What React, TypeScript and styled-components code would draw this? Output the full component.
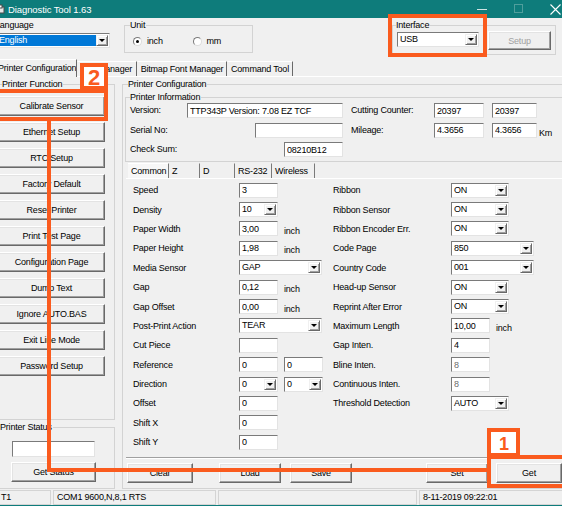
import React from "react";
import styled, { createGlobalStyle } from "styled-components";

const TEAL = "#0e7c7b";
const ORANGE = "#fa5b1e";

const GlobalStyle = createGlobalStyle`
  html, body {
    margin: 0;
    padding: 0;
    background: #f0f0f0;
  }
  body {
    font-family: "Liberation Sans", Arial, sans-serif;
    font-size: 9px;
    letter-spacing: -0.2px;
    color: #000;
  }
  * {
    box-sizing: border-box;
  }
`;

const Page = styled.div`
  position: relative;
  width: 562px;
  height: 506px;
  overflow: hidden;
  background: #f0f0f0;
`;

// the screenshot is cropped: the window starts 8px left of the picture
const Window = styled.div`
  width: 582px;
  height: 506px;
  margin-left: -8px;
  display: flex;
  flex-direction: column;
  border-bottom: 1px solid ${TEAL};
`;

/* ---------- title bar ---------- */

const TitleBar = styled.div`
  flex: none;
  height: 18px;
  display: flex;
  align-items: center;
  background: ${TEAL};
  color: #fff;
`;

const AppIcon = styled.svg`
  flex: none;
  width: 11px;
  height: 11px;
  margin-left: 2px;
`;

const Title = styled.span`
  margin-left: 3px;
  font-size: 9.5px;
  letter-spacing: -0.1px;
`;

const WinControls = styled.div`
  margin-left: auto;
  display: flex;
`;

const WinButton = styled.div`
  width: 37px;
  height: 18px;
  display: flex;
  align-items: center;
  justify-content: center;
`;

/* ---------- shared controls ---------- */

const Group = styled.fieldset<{ $w: number; $h: number }>`
  flex: none;
  margin: 0;
  padding: 0;
  min-width: 0;
  width: ${(p) => p.$w}px;
  height: ${(p) => p.$h}px;
  border: 1px solid #d3d3d3;
`;

const GroupTitle = styled.legend<{ $x: number }>`
  margin-left: ${(p) => p.$x}px;
  padding: 0 1px 0 0;
  line-height: 10px;
  font-size: 9px;
`;

const Button = styled.button<{ $w: number; $h?: number; $disabled?: boolean }>`
  flex: none;
  width: ${(p) => p.$w}px;
  height: ${(p) => p.$h ?? 20}px;
  padding: 0;
  margin: 0;
  font: inherit;
  letter-spacing: inherit;
  color: ${(p) => (p.$disabled ? "#a0a0a0" : "#000")};
  background: #f0f0f0;
  border: 1px solid;
  border-color: #fff #696969 #696969 #fff;
  box-shadow: inset -1px -1px 0 #a0a0a0, inset 1px 1px 0 #e3e3e3;
  text-align: center;
`;

const TextBox = styled.input<{ $w: number; $dim?: boolean }>`
  flex: none;
  width: ${(p) => p.$w}px;
  height: 15px;
  margin: 0;
  padding: 0 2px;
  font: inherit;
  letter-spacing: inherit;
  color: ${(p) => (p.$dim ? "#6d6d6d" : "#000")};
  background: #fff;
  border: 1px solid;
  border-color: #7a7a7a #e3e3e3 #e3e3e3 #7a7a7a;
  outline: none;
`;

const ComboBox = styled.div<{ $w: number }>`
  flex: none;
  width: ${(p) => p.$w}px;
  height: 15px;
  display: flex;
  padding: 1px;
  background: #fff;
  border: 1px solid;
  border-color: #7a7a7a #e3e3e3 #e3e3e3 #7a7a7a;
`;

const ComboText = styled.span<{ $selected?: boolean }>`
  flex: 1;
  padding-left: 1px;
  line-height: 11px;
  white-space: nowrap;
  overflow: hidden;
  background: ${(p) => (p.$selected ? "#0078d7" : "transparent")};
  color: ${(p) => (p.$selected ? "#fff" : "#000")};
`;

const ComboArrow = styled.span`
  flex: none;
  width: 12px;
  display: flex;
  align-items: center;
  justify-content: center;
  background: #f0f0f0;
  border: 1px solid;
  border-color: #f0f0f0 #696969 #696969 #f0f0f0;
  box-shadow: inset 1px 1px 0 #fff, inset -1px -1px 0 #a0a0a0;

  &::after {
    content: "";
    border-left: 3px solid transparent;
    border-right: 3px solid transparent;
    border-top: 3px solid #000;
  }
`;

function Combo({ w, value, selected }: { w: number; value: string; selected?: boolean }) {
  return (
    <ComboBox $w={w}>
      <ComboText $selected={selected}>{value}</ComboText>
      <ComboArrow />
    </ComboBox>
  );
}

/* ---------- top area ---------- */

const TopArea = styled.div`
  flex: none;
  height: 40px;
  display: flex;
  align-items: flex-start;
`;

const LangBlock = styled.div`
  flex: none;
  width: 115px;
  margin-left: 3px;
  padding-top: 2px;
`;

const Caption = styled.div`
  line-height: 11px;
  margin-bottom: 2px;
`;

const LangCombo = styled.div`
  margin-left: 1px;
`;

const UnitGroup = styled(Group)`
  margin: 2px 0 0 14px;
`;

const RadioRow = styled.div`
  display: flex;
  align-items: center;
  height: 14px;
  margin-top: 4px;
  padding-left: 8px;
`;

const RadioItem = styled.label`
  width: 60px;
  display: flex;
  align-items: center;
`;

const RadioDot = styled.span<{ $on?: boolean }>`
  flex: none;
  width: 9px;
  height: 9px;
  border-radius: 50%;
  background: #fff;
  border: 1px solid;
  border-color: #7a7a7a #dcdcdc #dcdcdc #7a7a7a;
  display: flex;
  align-items: center;
  justify-content: center;
  margin-right: 5px;

  &::after {
    content: "";
    width: 3px;
    height: 3px;
    border-radius: 50%;
    background: ${(p) => (p.$on ? "#000" : "transparent")};
  }
`;

const InterfaceGroup = styled(Group)`
  margin: 2px 0 0 139px;
`;

const InterfaceRow = styled.div`
  display: flex;
  align-items: flex-start;
  padding-left: 4px;
  padding-top: 2px;
`;

const SetupButton = styled(Button)`
  margin: -1px 0 0 9px;
`;

/* ---------- main tabs ---------- */

const TabStrip = styled.div`
  flex: none;
  height: 18px;
  display: flex;
  align-items: flex-end;
`;

const Tab = styled.div<{ $w: number; $active?: boolean }>`
  position: relative;
  z-index: ${(p) => (p.$active ? 1 : 0)};
  flex: none;
  width: ${(p) => p.$w}px;
  height: ${(p) => (p.$active ? 18 : 15)}px;
  margin-bottom: ${(p) => (p.$active ? -1 : 0)}px;
  padding-left: ${(p) => (p.$active ? 5 : 0)}px;
  display: flex;
  align-items: center;
  justify-content: ${(p) => (p.$active ? "flex-start" : "center")};
  padding-bottom: ${(p) => (p.$active ? 2 : 0)}px;
  background: #f0f0f0;
  border-top: 1px solid #fff;
  border-left: 1px solid ${(p) => (p.$active ? "#fff" : "transparent")};
  border-right: 1px solid #696969;
  white-space: nowrap;
  overflow: hidden;
`;

const TabPanel = styled.div`
  flex: none;
  height: 414px;
  display: flex;
  align-items: flex-start;
  border-top: 1px solid #fff;
`;

const LeftCol = styled.div`
  flex: none;
  width: 123px;
  display: flex;
  flex-direction: column;
`;

const FunctionGroup = styled(Group)`
  margin: 2px 0 0 2px;
`;

const ButtonStack = styled.div`
  display: flex;
  flex-direction: column;
  gap: 6px;
  padding: 7px 0 0 3px;
`;

const StatusGroup = styled(Group)`
  margin: 2px 0 0 2px;
`;

const StatusField = styled(TextBox)`
  display: block;
  height: 16px;
  margin: 9px 0 0 17px;
`;

const GetStatusButton = styled(Button)`
  display: block;
  margin: 5px 0 0 16px;
`;

const ConfigGroup = styled(Group)`
  margin: 2px 0 0 7px;
`;

const InfoGroup = styled(Group)`
  margin: 3px 0 0 2px;
`;

const InfoGrid = styled.div`
  display: grid;
  grid-template-columns: 57px 156px 8px 83px 50px 8px 45px auto;
  grid-auto-rows: 19.5px;
  align-items: start;
  padding: 1px 0 0 4px;
`;

const FieldLabel = styled.span`
  line-height: 15px;
  white-space: nowrap;
`;

const RightBox = styled(TextBox)`
  justify-self: end;
`;

const Unit = styled.span<{ $gap?: number }>`
  margin-left: ${(p) => p.$gap ?? 6}px;
  padding-top: 5px;
  line-height: 11px;
  white-space: nowrap;
`;

const InnerTabs = styled.div`
  display: flex;
  height: 15px;
  margin: 1px 0 0 5px;
`;

const InnerTab = styled.div<{ $w: number; $active?: boolean }>`
  flex: none;
  width: ${(p) => p.$w}px;
  padding-left: 3px;
  display: flex;
  align-items: center;
  background: ${(p) => (p.$active ? "#f7f7f7" : "#f0f0f0")};
  border-top: 1px solid ${(p) => (p.$active ? "#fff" : "transparent")};
  border-right: 1px solid #7a7a7a;
  white-space: nowrap;
`;

const InnerPanel = styled.div`
  margin-left: 3px;
  width: 450px;
  height: 280px;
  padding: 1.5px 0 0 7px;
  border-top: 1px solid #fff;
  border-bottom: 1px solid #a0a0a0;
  box-shadow: 0 1px 0 #fff;
`;

const ParamGrid = styled.div`
  display: grid;
  grid-template-columns: 106px 94px 118px 1fr;
  grid-auto-rows: 19.4px;
  align-items: center;
`;

const ParamLabel = styled.span`
  white-space: nowrap;
`;

const ControlCell = styled.div`
  display: flex;
  align-items: center;
  gap: 6px;
`;

const ActionRow = styled.div`
  display: flex;
  margin-top: 5px;
  padding-left: 4px;
`;

const ActionButton = styled(Button)<{ $gap: number }>`
  margin-left: ${(p) => p.$gap}px;
`;

/* ---------- status bar ---------- */

const StatusBar = styled.div`
  flex: none;
  height: 15px;
  display: flex;
  gap: 2px;
`;

const StatusPanel = styled.div<{ $w?: number; $pad?: number }>`
  flex: ${(p) => (p.$w ? "none" : "1")};
  width: ${(p) => (p.$w ? `${p.$w}px` : "auto")};
  padding-left: ${(p) => p.$pad ?? 3}px;
  line-height: 13px;
  border: 1px solid #d4d4d4;
  white-space: nowrap;
  overflow: hidden;
`;

/* ---------- annotation overlay ---------- */

const Overlay = styled.svg`
  position: absolute;
  left: 0;
  top: 0;
  width: 562px;
  height: 506px;
  pointer-events: none;
`;

const Marker = styled.text`
  font-family: "Liberation Sans", Arial, sans-serif;
  font-weight: bold;
  fill: ${ORANGE};
`;

/* ---------- data ---------- */

type Ctl =
  | { kind: "input"; value: string; w?: number; dim?: boolean }
  | { kind: "combo"; value: string; w: number }
  | { kind: "unit"; text: string };

const inp = (value: string, dim?: boolean): Ctl => ({ kind: "input", value, dim });
const cmb = (value: string, w: number): Ctl => ({ kind: "combo", value, w });
const inch: Ctl = { kind: "unit", text: "inch" };

const params: [string, Ctl[], string, Ctl[]][] = [
  ["Speed", [inp("3")], "Ribbon", [cmb("ON", 58)]],
  ["Density", [cmb("10", 39)], "Ribbon Sensor", [cmb("ON", 58)]],
  ["Paper Width", [inp("3,00"), inch], "Ribbon Encoder Err.", [cmb("ON", 58)]],
  ["Paper Height", [inp("1,98"), inch], "Code Page", [cmb("850", 83)]],
  ["Media Sensor", [cmb("GAP", 83)], "Country Code", [cmb("001", 83)]],
  ["Gap", [inp("0,12"), inch], "Head-up Sensor", [cmb("ON", 58)]],
  ["Gap Offset", [inp("0,00"), inch], "Reprint After Error", [cmb("ON", 58)]],
  ["Post-Print Action", [cmb("TEAR", 83)], "Maximum Length", [inp("10,00"), inch]],
  ["Cut Piece", [inp("")], "Gap Inten.", [inp("4")]],
  ["Reference", [inp("0"), inp("0")], "Bline Inten.", [inp("8", true)]],
  ["Direction", [cmb("0", 39), cmb("0", 39)], "Continuous Inten.", [inp("8", true)]],
  ["Offset", [inp("0")], "Threshold Detection", [cmb("AUTO", 58)]],
  ["Shift X", [inp("0")], "", []],
  ["Shift Y", [inp("0")], "", []],
];

const functions = [
  "Calibrate Sensor",
  "Ethernet Setup",
  "RTC Setup",
  "Factory Default",
  "Reset Printer",
  "Print Test Page",
  "Configuration Page",
  "Dump Text",
  "Ignore AUTO.BAS",
  "Exit Line Mode",
  "Password Setup",
];

const renderCtl = (c: Ctl, i: number) => {
  if (c.kind === "input")
    return <TextBox key={i} $w={c.w ?? 39} $dim={c.dim} readOnly value={c.value} />;
  if (c.kind === "combo") return <Combo key={i} w={c.w} value={c.value} />;
  return (
    <Unit key={i} $gap={0}>
      {c.text}
    </Unit>
  );
};

export default function App() {
  return (
    <Page>
      <GlobalStyle />
      <Window>
        <TitleBar>
          <AppIcon viewBox="0 0 11 11">
            <rect x="1" y="3" width="9" height="6" fill="#e6e6e6" stroke="#4a4a4a" strokeWidth="1" />
            <rect x="3" y="1" width="5" height="3" fill="#fff" stroke="#4a4a4a" strokeWidth="1" />
          </AppIcon>
          <Title>Diagnostic Tool 1.63</Title>
          <WinControls>
            <WinButton>
              <svg width="10" height="10" viewBox="0 0 10 10">
                <line x1="0" y1="5.5" x2="10" y2="5.5" stroke="#cfe4e3" strokeWidth="1" />
              </svg>
            </WinButton>
            <WinButton>
              <svg width="10" height="10" viewBox="0 0 10 10">
                <rect x="0.5" y="0.5" width="8" height="8" fill="none" stroke="#4f9e9c" strokeWidth="1" />
              </svg>
            </WinButton>
            <WinButton>
              <svg width="11" height="11" viewBox="0 0 11 11">
                <path d="M0.5 0.5 L10.5 10.5 M10.5 0.5 L0.5 10.5" stroke="#fff" strokeWidth="1.1" />
              </svg>
            </WinButton>
          </WinControls>
        </TitleBar>

        <TopArea>
          <LangBlock>
            <Caption>Language</Caption>
            <LangCombo>
              <Combo w={114} value="English" selected />
            </LangCombo>
          </LangBlock>

          <UnitGroup $w={129} $h={33}>
            <GroupTitle $x={5}>Unit</GroupTitle>
            <RadioRow>
              <RadioItem>
                <RadioDot $on />
                inch
              </RadioItem>
              <RadioItem>
                <RadioDot />
                mm
              </RadioItem>
            </RadioRow>
          </UnitGroup>

          <InterfaceGroup $w={164} $h={35}>
            <GroupTitle $x={3}>Interface</GroupTitle>
            <InterfaceRow>
              <Combo w={82} value="USB" />
              <SetupButton $w={63} $h={19} $disabled>
                Setup
              </SetupButton>
            </InterfaceRow>
          </InterfaceGroup>
        </TopArea>

        <TabStrip>
          <Tab $w={85} $active>
            Printer Configuration
          </Tab>
          <Tab $w={60}>File Manager</Tab>
          <Tab $w={90}>Bitmap Font Manager</Tab>
          <Tab $w={66}>Command Tool</Tab>
        </TabStrip>

        <TabPanel>
          <LeftCol>
            <FunctionGroup $w={121} $h={341}>
              <GroupTitle $x={7}>Printer Function</GroupTitle>
              <ButtonStack>
                {functions.map((f) => (
                  <Button key={f} $w={107}>
                    {f}
                  </Button>
                ))}
              </ButtonStack>
            </FunctionGroup>

            <StatusGroup $w={121} $h={67}>
              <GroupTitle $x={5}>Printer Status</GroupTitle>
              <StatusField $w={83} readOnly value="" />
              <GetStatusButton $w={85}>Get Status</GetStatusButton>
            </StatusGroup>
          </LeftCol>

          <ConfigGroup $w={460} $h={410}>
            <GroupTitle $x={5}>Printer Configuration</GroupTitle>

            <InfoGroup $w={455} $h={70}>
              <GroupTitle $x={4}>Printer Information</GroupTitle>
              <InfoGrid>
                <FieldLabel>Version:</FieldLabel>
                <RightBox $w={156} readOnly value="TTP343P Version: 7.08 EZ TCF" />
                <span />
                <FieldLabel>Cutting Counter:</FieldLabel>
                <TextBox $w={50} readOnly value="20397" />
                <span />
                <TextBox $w={45} readOnly value="20397" />
                <span />

                <FieldLabel>Serial No:</FieldLabel>
                <RightBox $w={88} readOnly value="" />
                <span />
                <FieldLabel>Mileage:</FieldLabel>
                <TextBox $w={50} readOnly value="4.3656" />
                <span />
                <TextBox $w={45} readOnly value="4.3656" />
                <Unit $gap={2}>Km</Unit>

                <FieldLabel>Check Sum:</FieldLabel>
                <RightBox $w={59} readOnly value="08210B12" />
              </InfoGrid>
            </InfoGroup>

            <InnerTabs>
              <InnerTab $w={41} $active>
                Common
              </InnerTab>
              <InnerTab $w={31}>Z</InnerTab>
              <InnerTab $w={35}>D</InnerTab>
              <InnerTab $w={37}>RS-232</InnerTab>
              <InnerTab $w={43}>Wireless</InnerTab>
            </InnerTabs>

            <InnerPanel>
              <ParamGrid>
                {params.map(([l1, c1, l2, c2]) => (
                  <React.Fragment key={l1}>
                    <ParamLabel>{l1}</ParamLabel>
                    <ControlCell>{c1.map(renderCtl)}</ControlCell>
                    <ParamLabel>{l2}</ParamLabel>
                    <ControlCell>{c2.map(renderCtl)}</ControlCell>
                  </React.Fragment>
                ))}
              </ParamGrid>
            </InnerPanel>

            <ActionRow>
              <ActionButton $w={66} $gap={0}>
                Clear
              </ActionButton>
              <ActionButton $w={62} $gap={26}>
                Load
              </ActionButton>
              <ActionButton $w={62} $gap={9}>
                Save
              </ActionButton>
              <ActionButton $w={62} $gap={74}>
                Set
              </ActionButton>
              <ActionButton $w={66} $gap={8}>
                Get
              </ActionButton>
            </ActionRow>
          </ConfigGroup>
        </TabPanel>

        <StatusBar>
          <StatusPanel $w={59} $pad={8}>
            T1
          </StatusPanel>
          <StatusPanel $w={163}>COM1 9600,N,8,1 RTS</StatusPanel>
          <StatusPanel $w={199} />
          <StatusPanel>8-11-2019 09:22:01</StatusPanel>
        </StatusBar>
      </Window>

      <Overlay viewBox="0 0 562 506">
        <g fill="none" stroke={ORANGE} strokeWidth={4}>
          <rect x={390} y={16} width={95} height={39} />
          <rect x={-4} y={91} width={110} height={28} />
          <rect x={489} y={457} width={80} height={29} />
          <polyline points="49,121 49,470 489,470" />
        </g>
        <g fill="#fff" stroke={ORANGE} strokeWidth={4}>
          <rect x={82} y={65} width={24} height={23} />
          <rect x={489} y={430} width={29} height={25} />
        </g>
        <Marker x={94} y={85} fontSize={22} textAnchor="middle">
          2
        </Marker>
        <Marker x={504} y={450} fontSize={18} textAnchor="middle">
          1
        </Marker>
      </Overlay>
    </Page>
  );
}
